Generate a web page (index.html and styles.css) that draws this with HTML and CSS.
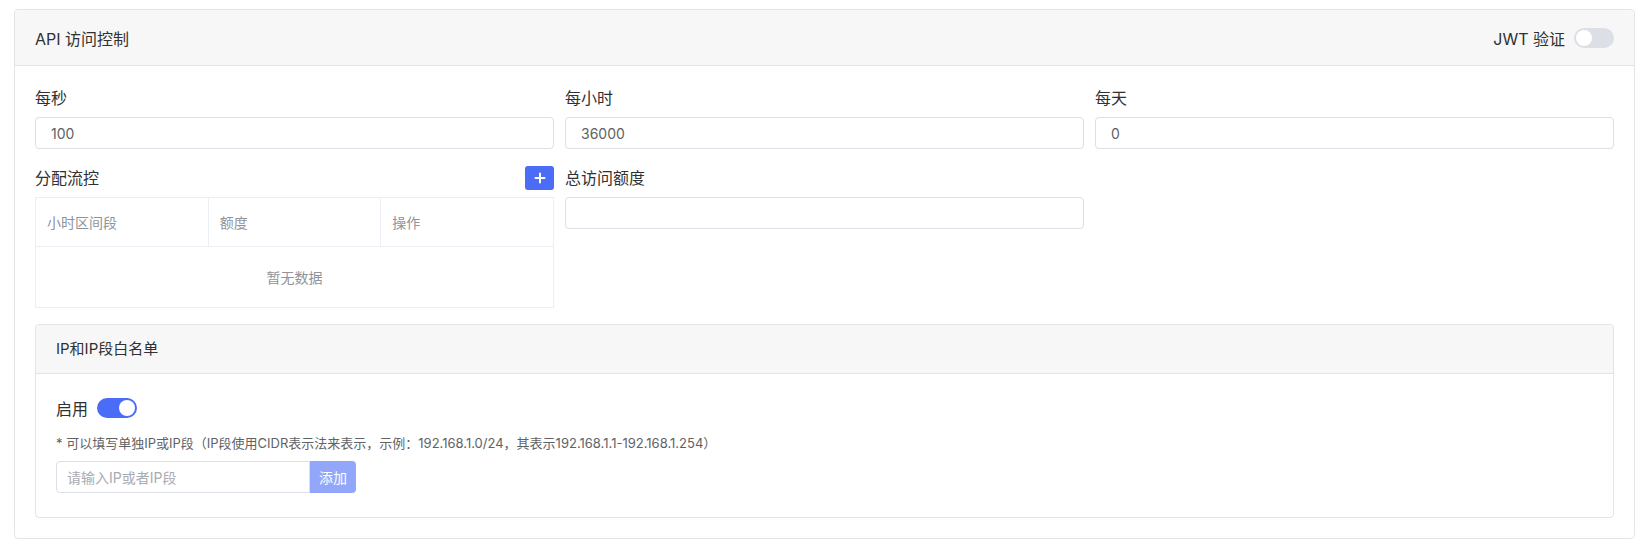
FILE: index.html
```html
<!DOCTYPE html>
<html lang="zh-CN">
<head>
    <meta charset="UTF-8">
    <meta name="viewport" content="width=device-width, initial-scale=1.0">
    <title>API 访问控制</title>
    <link rel="stylesheet" href="styles.css">
</head>
<body>
    <div class="card">
        <div class="card-header">
            <span class="card-title">API 访问控制</span>
            <div class="switch-field">
                <span>JWT 验证</span>
                <span class="switch"><span class="switch-knob"></span></span>
            </div>
        </div>
        <div class="card-body">
            <div class="form-grid">
                <div class="form-item">
                    <div class="form-label">每秒</div>
                    <input class="input" type="text" value="100">
                </div>
                <div class="form-item">
                    <div class="form-label">每小时</div>
                    <input class="input" type="text" value="36000">
                </div>
                <div class="form-item">
                    <div class="form-label">每天</div>
                    <input class="input" type="text" value="0">
                </div>

                <div class="form-item">
                    <div class="form-label label-row">
                        <span>分配流控</span>
                        <button class="btn-plus" type="button">
                            <svg width="12" height="12" viewBox="0 0 12 12">
                                <path d="M6 1.5v9M1.5 6h9" stroke="#fff" stroke-width="2" stroke-linecap="round"/>
                            </svg>
                        </button>
                    </div>
                    <table class="table">
                        <thead>
                            <tr>
                                <th>小时区间段</th>
                                <th>额度</th>
                                <th>操作</th>
                            </tr>
                        </thead>
                        <tbody>
                            <tr>
                                <td class="empty" colspan="3">暂无数据</td>
                            </tr>
                        </tbody>
                    </table>
                </div>
                <div class="form-item">
                    <div class="form-label">总访问额度</div>
                    <input class="input" type="text" value="">
                </div>
                <div></div>
            </div>

            <div class="sub-card">
                <div class="sub-card-header">IP和IP段白名单</div>
                <div class="sub-card-body">
                    <div class="switch-field">
                        <span>启用</span>
                        <span class="switch is-on"><span class="switch-knob"></span></span>
                    </div>
                    <p class="tip">* 可以填写单独IP或IP段（IP段使用CIDR表示法来表示，示例：192.168.1.0/24，其表示192.168.1.1-192.168.1.254）</p>
                    <div class="input-group">
                        <input class="input" type="text" placeholder="请输入IP或者IP段">
                        <button class="btn-append" type="button">添加</button>
                    </div>
                </div>
            </div>
        </div>
    </div>
</body>
</html>
```

FILE: styles.css
```css
body {
    margin: 0;
    padding: 9px 13px 9px 14px;
    font-family: Inter, "Noto Sans CJK SC", sans-serif;
    color: #303133;
    background: #fff;
}
.card {
    border: 1px solid #e4e4e4;
    border-radius: 4px;
    background: #fff;
}
.card-header {
    display: flex;
    align-items: center;
    justify-content: space-between;
    height: 55px;
    padding: 0 20px;
    background: #f7f7f7;
    border-bottom: 1px solid #e4e4e4;
    border-radius: 4px 4px 0 0;
}
.card-title {
    font-size: 16px;
}
.switch-field {
    display: flex;
    align-items: center;
    gap: 9px;
    font-size: 16px;
    height: 28px;
}
.switch {
    position: relative;
    display: inline-block;
    width: 40px;
    height: 20px;
    border-radius: 10px;
    background: #dcdfe6;
}
.switch-knob {
    position: absolute;
    top: 2px;
    left: 2px;
    width: 16px;
    height: 16px;
    border-radius: 50%;
    background: #fff;
}
.switch.is-on {
    background: #4a6cf7;
}
.switch.is-on .switch-knob {
    left: 22px;
}
.card-body {
    padding: 18px 20px 20px;
}
.form-grid {
    display: grid;
    grid-template-columns: repeat(3, 1fr);
    column-gap: 11px;
    row-gap: 15px;
}
.form-label {
    font-size: 16px;
    line-height: 28px;
    margin-bottom: 5px;
}
.label-row {
    display: flex;
    align-items: center;
    justify-content: space-between;
}
.btn-plus {
    display: flex;
    align-items: center;
    justify-content: center;
    width: 29px;
    height: 24px;
    padding: 0;
    border: none;
    border-radius: 3px;
    background: #4a6cf7;
    cursor: pointer;
}
.input {
    display: block;
    box-sizing: border-box;
    width: 100%;
    height: 32px;
    padding: 0 15px;
    border: 1px solid #dcdfe6;
    border-radius: 4px;
    font-family: inherit;
    font-size: 14px;
    color: #606266;
    outline: none;
}
.input::placeholder {
    color: #a8abb2;
}
.table {
    width: 100%;
    border-collapse: collapse;
    table-layout: fixed;
    font-size: 14px;
}
.table th,
.table td {
    border: 1px solid #ebeef5;
}
.table th {
    height: 48px;
    padding: 0 11px;
    text-align: left;
    font-weight: normal;
    color: #909399;
}
.table td.empty {
    height: 58px;
    text-align: center;
    color: #909399;
}
.sub-card {
    margin-top: 16px;
    border: 1px solid #e4e4e4;
    border-radius: 4px;
}
.sub-card-header {
    height: 48px;
    line-height: 48px;
    padding: 0 20px;
    font-size: 15px;
    background: #f7f7f7;
    border-bottom: 1px solid #e4e4e4;
    border-radius: 4px 4px 0 0;
}
.sub-card-body {
    padding: 20px 20px 24px;
}
.tip {
    margin: 12px 0 9px;
    font-size: 13px;
    line-height: 18px;
    color: #606266;
}
.input-group {
    display: flex;
    width: 300px;
}
.input-group .input {
    flex: 1;
    padding: 0 10px;
    border-radius: 4px 0 0 4px;
}
.btn-append {
    width: 46px;
    height: 32px;
    padding: 0;
    border: none;
    border-radius: 0 4px 4px 0;
    background: #92a7fa;
    color: #fff;
    font-family: inherit;
    font-size: 14px;
    cursor: not-allowed;
}
```
